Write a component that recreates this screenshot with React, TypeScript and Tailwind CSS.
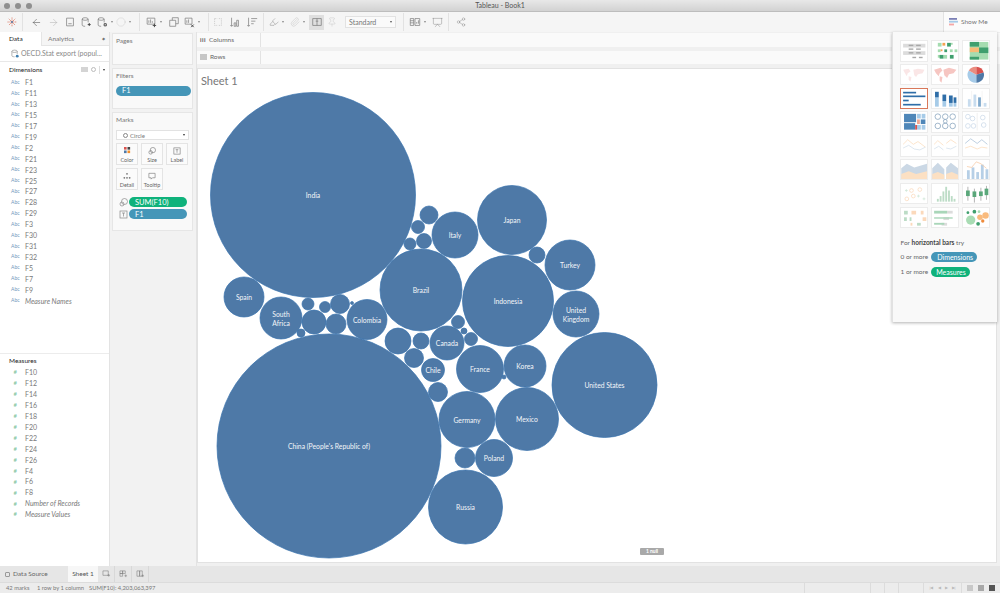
import { ReactNode } from 'react';
import { ArrowLeft, ArrowRight, Share2, Presentation, Paperclip, Pin, Highlighter, Circle as CircleIcon } from 'lucide-react';

// -- Data --------------------------------------------------------------------

const dimensions = ['F1', 'F11', 'F13', 'F15', 'F17', 'F19', 'F2', 'F21', 'F23', 'F25', 'F27', 'F28', 'F29', 'F3', 'F30', 'F31', 'F32', 'F5', 'F7', 'F9'];
const measures = ['F10', 'F12', 'F14', 'F16', 'F18', 'F20', 'F22', 'F24', 'F26', 'F4', 'F6', 'F8'];

// [cx, cy, r, label lines]
const bubbles: [number, number, number, string[]][] = [
  [313, 195, 102.5, ['India']],
  [329, 446, 112, ["China (People's Republic of)"]],
  [421, 290, 41, ['Brazil']],
  [508, 301, 45.5, ['Indonesia']],
  [512, 220, 34.5, ['Japan']],
  [604.5, 385, 52.5, ['United States']],
  [465.5, 507, 37, ['Russia']],
  [467, 419.5, 28, ['Germany']],
  [527, 419, 31.5, ['Mexico']],
  [480, 369, 23.5, ['France']],
  [525, 366, 21, ['Korea']],
  [447, 343, 17, ['Canada']],
  [433, 370, 11.5, ['Chile']],
  [455, 235, 23, ['Italy']],
  [570, 265, 25, ['Turkey']],
  [576, 314, 23, ['United', 'Kingdom']],
  [367, 319.5, 20, ['Colombia']],
  [281, 318, 21, ['South', 'Africa']],
  [244, 297, 20, ['Spain']],
  [494, 458, 18.5, ['Poland']],
  [465, 458, 10, []],
  [429, 215, 9, []],
  [418, 227, 6.5, []],
  [424, 241, 7.5, []],
  [410, 244, 6, []],
  [537, 255, 8, []],
  [458, 322, 6.5, []],
  [464, 331, 3, []],
  [471, 339, 6.5, []],
  [398, 341, 13, []],
  [421, 341, 8, []],
  [414, 358, 9.5, []],
  [438, 392, 9.5, []],
  [504, 377, 2, []],
  [308, 304, 6, []],
  [325, 307, 5.5, []],
  [340, 304, 9.5, []],
  [314, 322, 12, []],
  [336, 324, 10, []],
  [301, 333, 4, []],
  [352, 303, 1.5, []],
];

// -- Small pieces ------------------------------------------------------------

const Caret = () => <span className="mx-[3px] h-0 w-0 border-x-[1.5px] border-t-[2px] border-x-transparent border-t-[#888]" />;

const Sep = () => <span className="mx-[5px] h-[18px] w-px bg-[#e2e2e2]" />;

const Glyph = ({ children, w = 12, dim = false }: { children: ReactNode; w?: number; dim?: boolean }) => (
  <svg viewBox="0 0 14 14" width={w} height={w} fill="none" stroke="#777" strokeWidth={0.8} className={dim ? 'opacity-40' : ''}>
    {children}
  </svg>
);

const Db = ({ badge }: { badge: string }) => (
  <Glyph>
    <ellipse cx="6" cy="3.5" rx="3.5" ry="1.5" />
    <path d="M2.5 3.5v7c0 1 1.5 1.5 3.5 1.5M9.5 3.5v4" />
    <path d={badge} stroke="#444" strokeWidth={1.1} />
  </Glyph>
);

const Pill = ({ color, label, className }: { color: string; label: string; className: string }) => (
  <div className={`flex items-center rounded-full pl-[6px] text-[7.5px] text-white ${color} ${className}`}>{label}</div>
);

const MarkCard = ({ label, children }: { label: string; children: ReactNode }) => (
  <div className="flex h-[22px] w-[22px] flex-col items-center border border-[#e4e4e4] bg-[#fbfbfb] pt-[2px] text-[5.5px] text-[#666]">
    <div className="flex h-[11px] items-center">{children}</div>
    <span className="mt-px">{label}</span>
  </div>
);

const Shelf = ({ icon, label }: { icon: ReactNode; label: string }) => (
  <div className="flex h-[13.5px] bg-[#fafafa]">
    <div className="flex w-[64px] items-center gap-[3px] border-r border-[#e3e3e3] pl-[3px] text-[6.5px] text-[#666]">
      {icon}
      {label}
    </div>
    <div className="flex-1" />
  </div>
);

// -- Show Me thumbnails ------------------------------------------------------

const Thumb = ({ children, active = false }: { children: ReactNode; active?: boolean }) => (
  <div className={`h-[21.5px] w-[28.5px] border bg-white ${active ? 'border-[#d9785a]' : 'border-[#ececec]'}`}>
    <svg viewBox="0 0 28 21" className="h-full w-full">
      {children}
    </svg>
  </div>
);

const Rects = ({ items, fill, opacity = 1 }: { items: number[][]; fill: string; opacity?: number }) => (
  <g fill={fill} opacity={opacity}>
    {items.map((r, i) => (
      <rect key={i} x={r[0]} y={r[1]} width={r[2]} height={r[3]} />
    ))}
  </g>
);

const Line = ({ d, c }: { d: string; c: string }) => <path d={d} fill="none" stroke={c} strokeWidth={0.8} />;

const thumbs: ReactNode[] = [
  <g key="text">
    <Rects fill="#dcdcdc" items={[[2, 3, 24, 4], [2, 11, 24, 4]]} />
    <Rects fill="#a8a8a8" items={[[8, 4, 5, 1.5], [16, 4, 5, 1.5], [8, 8, 5, 1.5], [16, 8, 5, 1.5], [8, 12, 5, 1.5], [16, 12, 5, 1.5], [12, 17, 4, 1.5], [19, 17, 4, 1.5]]} />
  </g>,
  <g key="sym">
    <Rects fill="#a5dcb0" items={[[6, 2, 4, 4], [20, 2, 2, 2], [6, 9, 3, 3], [19, 9, 3, 3], [24, 9, 3, 3], [12, 15, 4, 4], [6, 15, 3, 3]]} />
    <Rects fill="#3f9f6e" items={[[16, 2, 4, 4], [13, 9, 3, 3], [8, 15, 4, 4], [19, 15, 4, 4]]} />
    <Rects fill="#f5a252" items={[[11, 2, 3, 3], [9, 9, 2, 2]]} />
  </g>,
  <g key="heat">
    <Rects fill="#a5dcb0" items={[[7, 1, 20, 19]]} />
    <Rects fill="#3f9f6e" items={[[7, 1, 10, 5], [17, 7, 10, 6], [7, 17, 10, 3]]} />
    <Rects fill="#f7bb77" items={[[7, 7, 10, 5]]} />
  </g>,
  <g key="map1" opacity={0.35}>
    <path d="M2 5l6-1 2 3-3 2-1 3-2-3zM8 12l3 1-1 5-2-2zM13 5l5-1 7 1-2 4-5 1-2 3-2-2z" fill="#f2b6b6" />
  </g>,
  <g key="map2">
    <path d="M2 5l7-2 2 3-3 3-1 3-3-3zM8 12l3 1-1 6-2-2zM12 5l6-2 8 2-3 4-5 1-2 4-3-3z" fill="#f6c6c2" />
  </g>,
  <g key="pie">
    <path d="M14 10.5V2a8.5 8.5 0 0 1 8 6z" fill="#d9534f" />
    <path d="M14 10.5l8-2.5a8.5 8.5 0 0 1-8 11z" fill="#4e79a7" />
    <path d="M14 10.5V19a8.5 8.5 0 0 1-8-13z" fill="#a6cbe8" />
    <path d="M14 10.5L6 6a8.5 8.5 0 0 1 8-4z" fill="#ea8d80" />
  </g>,
  <g key="bars">
    <Rects fill="#2f6ea8" items={[[2, 3, 14, 1.8], [2, 7, 24, 1.8], [2, 11.5, 6, 1.8], [2, 16, 19, 1.8]]} />
  </g>,
  <g key="stack">
    <Rects fill="#a6cbe8" items={[[3, 9, 4, 10], [11, 13, 4, 6], [18, 15, 4, 4]]} />
    <Rects fill="#2f6ea8" items={[[3, 3, 4, 6], [11, 6, 4, 7], [18, 7, 4, 8], [23, 9, 3, 6]]} />
    <Rects fill="#a6cbe8" items={[[23, 15, 3, 4]]} />
  </g>,
  <g key="side">
    <Rects fill="#c8dcee" items={[[5, 11, 3, 8], [11, 6, 3, 13], [22, 15, 3, 4]]} />
    <Rects fill="#7fa9cc" items={[[16, 9, 3, 10]]} />
    <Rects fill="#e8e8e8" items={[[9, 2, 0.5, 17], [20, 2, 0.5, 17]]} />
  </g>,
  <g key="tree">
    <Rects fill="#4e86b8" items={[[3, 2, 13, 9], [3, 12, 12, 7], [21, 8, 5, 5]]} />
    <Rects fill="#a6cbe8" items={[[17, 2, 4, 5], [22, 2, 4, 5], [17, 14, 4, 5], [22, 14, 4, 5]]} />
    <Rects fill="#d9534f" items={[[15, 14, 2, 5]]} />
    <Rects fill="#f2a58e" items={[[17, 8, 3, 5]]} />
  </g>,
  <g key="circles" fill="none" stroke="#8fa9c2" strokeWidth={0.9}>
    <circle cx="6" cy="5" r="3" /><circle cx="14" cy="5" r="3" /><circle cx="22" cy="5" r="3" />
    <circle cx="6" cy="15" r="3" /><circle cx="14" cy="15" r="3" /><circle cx="22" cy="15" r="3" />
    <circle cx="14" cy="10" r="2" />
  </g>,
  <g key="circles2" fill="none" stroke="#cfdcea" strokeWidth={0.9}>
    <circle cx="5" cy="5" r="2.5" /><circle cx="10" cy="7" r="2.5" /><circle cx="21" cy="6" r="2.5" />
    <circle cx="5" cy="15" r="2.5" /><circle cx="11" cy="15" r="2.5" /><circle cx="22" cy="14" r="2.5" />
    <path d="M15 1v19" stroke="#eee" />
  </g>,
  <g key="line1">
    <Line d="M2 9l5-5 6 5 5-3 8 6" c="#fbdcbc" />
    <Line d="M2 13l6-3 6 4 6 1 6-3" c="#d3dfea" />
  </g>,
  <g key="line2">
    <Line d="M2 9l4-4 6 5M15 8l5-4 6 4" c="#fbdcbc" />
    <Line d="M2 14l5-3 5 4M15 13l5 1 6-3" c="#d3dfea" />
  </g>,
  <g key="line3">
    <Line d="M2 8l6-5 7 5 5-4 6 5" c="#a9c0d6" />
    <Line d="M2 13l6-2 7 3 5-2 6 1" c="#fbdcbc" />
  </g>,
  <g key="area1">
    <path d="M0 21V9l6-5 8 4 14-4v17z" fill="#cbd8e5" />
    <path d="M0 21v-6l8-3 8 3 12-3v9z" fill="#fce0c3" />
  </g>,
  <g key="area2">
    <path d="M0 21V9l6-6 7 7V21zM15 21V8l5-5 8 6v12z" fill="#cbd8e5" />
    <path d="M0 21v-6l6-2 7 3v5zM15 21v-6l6-2 7 3v5z" fill="#fce0c3" />
  </g>,
  <g key="dual">
    <Rects fill="#b6cfe6" items={[[4, 11, 3, 10], [9, 8, 3, 13], [14, 13, 3, 8], [19, 5, 3, 16], [24, 10, 3, 11]]} />
    <Line d="M4 7l5 1 5-6 5 2 6 5" c="#f7c9a3" />
  </g>,
  <g key="scatter" fill="none" stroke="#fbd9bb" strokeWidth={0.8}>
    <circle cx="6" cy="16" r="2" /><circle cx="11" cy="7" r="2" /><circle cx="20" cy="6" r="2" /><circle cx="13" cy="13" r="2" />
    <path d="M4 7h3M5.500 5.500v3M17 13h3M18.500 11.500v3M23 16h3M24.500 14.500v3" stroke="#cfe6d6" />
  </g>,
  <g key="hist">
    <Rects fill="#bcdcc6" items={[[5, 16, 2, 3], [8, 13, 2, 6], [11, 8, 2, 11], [14, 3, 2, 16], [17, 7, 2, 12], [20, 13, 2, 6], [23, 16, 2, 3]]} />
  </g>,
  <g key="box">
    <path d="M5 3v15M12 5v15M19 4v14M25 2v15" stroke="#777" strokeWidth={0.6} />
    <Rects fill="#5aa77a" items={[[3, 7, 4, 6], [10, 8, 4, 6], [17, 8, 4, 5], [23, 5, 4, 7]]} />
  </g>,
  <g key="gantt">
    <Rects fill="#bcdcc6" items={[[3, 3, 4, 4], [3, 10, 3, 4], [9, 10, 2, 4], [17, 16, 4, 3]]} />
    <Rects fill="#fbd9bb" items={[[11, 3, 5, 4], [21, 3, 3, 4], [23, 10, 4, 4], [10, 16, 2, 3]]} />
  </g>,
  <g key="bullet">
    <Rects fill="#dcdcdc" items={[[16, 3, 6, 3], [12, 10, 6, 3], [10, 16, 6, 3]]} />
    <Rects fill="#a9d6b9" items={[[2, 3, 14, 3], [2, 10, 20, 1.5], [2, 16, 11, 2]]} />
  </g>,
  <g key="packed">
    <circle cx="8" cy="13" r="5" fill="#a9dcb4" /><circle cx="12" cy="4" r="2" fill="#3f9f6e" /><circle cx="5" cy="5" r="1.500" fill="#3f9f6e" />
    <circle cx="17" cy="4" r="1.500" fill="#a9dcb4" /><circle cx="18" cy="10" r="3" fill="#f9bb7d" /><circle cx="24" cy="8" r="3.500" fill="#f9bb7d" />
    <circle cx="21" cy="14" r="1.800" fill="#ee8b3c" /><circle cx="16" cy="17" r="2" fill="#3f9f6e" />
  </g>,
];

// -- Sections ----------------------------------------------------------------

const Toolbar = () => (
  <div className="flex h-[20px] shrink-0 items-center bg-[#f5f5f5] pl-[7px]">
    <svg viewBox="0 0 10 10" width={10} height={10}>
      <path d="M5 0.500v9M0.500 5h9M1.800 1.800l6.400 6.400M8.200 1.800L1.800 8.200" stroke="#e08a78" strokeWidth={1} strokeDasharray="1.200 0.700" />
      <circle cx="5" cy="5" r="1" fill="#4e79a7" />
    </svg>
    <Sep />
    <div className="ml-[3px] flex w-[33px] items-center gap-[6px]">
      <ArrowLeft size={11} strokeWidth={1.1} color="#444" />
      <ArrowRight size={11} strokeWidth={1} color="#aaa" />
    </div>
    <div className="flex items-center gap-[4px]">
      <Glyph><path d="M3 2.500h8v9H3zM5 9h4" /></Glyph>
      <Db badge="M9 10h3.500M10.800 8.200v3.500" />
      <Db badge="M9.500 9h2.500v2.500H9.500z" />
    </div>
    <Caret />
    <CircleIcon size={10} strokeWidth={0.8} color="#bbb" />
    <Caret />
    <Sep />
    <Glyph><path d="M2.500 2.500h9v7h-9zM4.500 8V5M6.500 8V4M8.500 8V6" /><path d="M9 11h4M11 9v4" stroke="#444" strokeWidth={1.1} /></Glyph>
    <Caret />
    <span className="ml-[3px]"><Glyph><path d="M2 5h7v7H2zM5 5V2h7v7H9" /></Glyph></span>
    <span className="ml-[3px]"><Glyph><path d="M2.500 2.500h8v7h-8zM4.500 8V5M6.500 8V4" /><path d="M9.500 10l3 3M12.500 10l-3 3" stroke="#444" strokeWidth={1.1} /></Glyph></span>
    <Caret />
    <Sep />
    <div className="-ml-[2px] flex items-center gap-[5px]">
      <Glyph dim><path d="M3 3h3M8 3h3v8H8M3 3v8h3" strokeDasharray="1.500 1" /></Glyph>
      <Glyph><path d="M3 2v10M1.500 10.500L3 12l1.500-1.500M6 8h2v4H6zM9 5h2v7H9z" /></Glyph>
      <Glyph><path d="M3 2v10M1.500 10.500L3 12l1.500-1.500M6 3h7M6 6h5M6 9h3" /></Glyph>
    </div>
    <Sep />
    <Highlighter size={10} strokeWidth={1} color="#777" />
    <Caret />
    <span className="ml-[3px]"><Paperclip size={10} strokeWidth={1} color="#bbb" /></span>
    <Caret />
    <div className="ml-[1px] flex h-[15px] w-[15px] items-center justify-center bg-[#dfdfdf]">
      <Glyph w={12}><path d="M2 3h10v8H2zM7 3v8M5.500 6h3" /></Glyph>
    </div>
    <span className="ml-[3px]"><Pin size={10} strokeWidth={0.9} color="#bbb" /></span>
    <div className="ml-[8px] mr-[2px] flex h-[12px] w-[51px] items-center justify-between border border-[#e2e2e2] bg-[#fafafa] pl-[3px] pr-[3px] text-[7px] text-[#777]">
      Standard
      <span className="h-0 w-0 border-x-[1.5px] border-t-[2px] border-x-transparent border-t-[#555]" />
    </div>
    <Sep />
    <Glyph><path d="M1.500 3h4v8h-4zM7 3h5.500v8H7zM1.500 5.500h4M1.500 8h4M9 9V7M11 9V5" /></Glyph>
    <Caret />
    <span className="ml-[3px]"><Presentation size={11} strokeWidth={0.9} color="#777" /></span>
    <Sep />
    <Share2 size={10} strokeWidth={0.9} color="#777" className="ml-[2px]" />
    <div className="ml-auto flex h-full w-[57px] items-center gap-[3px] self-stretch border-l border-[#e2e2e2] bg-[#fbfbfb] pl-[5px] text-[6.5px] text-[#777]">
      <svg viewBox="0 0 9 9" width={9} height={9}>
        <rect y="0" width="8" height="1.800" fill="#7b7fb5" />
        <rect y="2.800" width="9" height="1.800" fill="#a6cbe8" />
        <rect y="5.600" width="5" height="1.800" fill="#f4a6a6" />
      </svg>
      Show Me
    </div>
  </div>
);

const FieldRow = ({ name, kind, italic = false }: { name: string; kind: 'dim' | 'mes'; italic?: boolean }) => (
  <div className="flex h-[10.93px] items-center">
    <span className="flex w-[25px] justify-start pl-[11px]">
      {kind === 'dim' ? (
        <span className="text-[5px] text-[#6f96bb]">Abc</span>
      ) : (
        <span className="ml-[2.500px] text-[6px] leading-none text-[#7cc29b]">#</span>
      )}
    </span>
    <span className={`text-[7px] text-[#7a7a7a] ${italic ? 'italic' : ''}`}>{name}</span>
  </div>
);

const DataPane = () => (
  <div className="flex w-[110px] flex-col border-r border-[#e3e3e3] bg-white">
    <div className="flex h-[14px] text-[6.500px]">
      <div className="flex w-[41px] items-center pl-[9px] text-[#222]">Data</div>
      <div className="flex flex-1 items-center justify-between border-b border-l border-[#e5e5e5] bg-[#f5f5f5] pl-[6px] pr-[4px] text-[#777]">
        Analytics
        <span className="text-[4px]">◆</span>
      </div>
    </div>
    <div className="flex h-[16px] items-center gap-[2px] border-b border-[#e8e8e8] pl-[11px] text-[7px] text-[#888]">
      <svg viewBox="0 0 9 10" width={8} height={9} fill="none" stroke="#888" strokeWidth={0.7}>
        <ellipse cx="4" cy="2.500" rx="3" ry="1.300" />
        <path d="M1 2.500v5c0 .7 1.300 1.200 3 1.200M7 2.500v3" />
        <circle cx="7" cy="8" r="1.600" fill="#3f7fb0" stroke="none" />
      </svg>
      OECD.Stat export (popul...
    </div>
    <div className="flex h-[15px] shrink-0 items-center justify-between pl-[9px] pr-[4px] text-[6.500px] text-[#222]">
      Dimensions
      <span className="flex items-center gap-[3px]">
        <span className="h-[5px] w-[7px] bg-[#d4d4d4]" />
        <span className="h-[5px] w-[5px] rounded-full border border-[#bbb]" />
        <span className="h-[8px] w-px bg-[#ddd]" />
        <span className="h-0 w-0 border-x-[1.500px] border-t-[2px] border-x-transparent border-t-[#333]" />
      </span>
    </div>
    <div className="h-[276px] shrink-0">
      {dimensions.map((d) => (
        <FieldRow key={d} name={d} kind="dim" />
      ))}
      <FieldRow name="Measure Names" kind="dim" italic />
    </div>
    <div className="flex h-[14px] shrink-0 items-center border-t border-[#ececec] pl-[9px] text-[6.500px] text-[#222]">Measures</div>
    <div className="flex-1">
      {measures.map((m) => (
        <FieldRow key={m} name={m} kind="mes" />
      ))}
      <FieldRow name="Number of Records" kind="mes" italic />
      <FieldRow name="Measure Values" kind="mes" italic />
    </div>
  </div>
);

const CardsPane = () => (
  <div className="flex w-[86px] flex-col gap-[3px] bg-[#f2f2f2] pl-[2px] pr-[3px] pt-[1px]">
    <div className="h-[32px] border border-[#e6e6e6] bg-[#f9f9f9] pl-[3px] pt-[1.500px] text-[6.500px] text-[#777]">Pages</div>
    <div className="h-[41px] border border-[#e6e6e6] bg-[#f9f9f9] pl-[3px] pt-[1.500px] text-[6.500px] text-[#777]">
      Filters
      <Pill color="bg-[#4596b8]" label="F1" className="mt-[5.500px] h-[10px] w-[75px]" />
    </div>
    <div className="h-[119px] border border-[#e6e6e6] bg-[#f9f9f9] pl-[3px] pt-[1.500px] text-[6.500px] text-[#777]">
      Marks
      <div className="mt-[5.500px] flex h-[10.500px] w-[73px] items-center justify-between border border-[#e2e2e2] bg-white pl-[6px] pr-[3px] text-[6px]">
        <span className="flex items-center gap-[2px]">
          <span className="h-[5px] w-[5px] rounded-full border border-[#888]" />
          Circle
        </span>
        <span className="h-0 w-0 border-x-[1.500px] border-t-[2px] border-x-transparent border-t-[#333]" />
      </div>
      <div className="mt-[3px] flex w-[75px] flex-wrap gap-x-[3px] gap-y-[3px]">
        <MarkCard label="Color">
          <svg viewBox="0 0 8 8" width={7} height={7}>
            <rect width="3" height="3" fill="#d9534f" /><rect x="4" width="3" height="3" fill="#444" />
            <rect y="4" width="3" height="3" fill="#4e79a7" /><rect x="4" y="4" width="3" height="3" fill="#f28e2b" />
          </svg>
        </MarkCard>
        <MarkCard label="Size">
          <svg viewBox="0 0 9 9" width={8} height={8} fill="none" stroke="#777" strokeWidth={0.7}>
            <circle cx="5.500" cy="3.500" r="3" /><circle cx="3" cy="6" r="2" />
          </svg>
        </MarkCard>
        <MarkCard label="Label">
          <svg viewBox="0 0 9 9" width={8} height={8} fill="none" stroke="#777" strokeWidth={0.7}>
            <rect x="1" y="1" width="7" height="7" /><path d="M3 3h3M4.500 3v3.500" />
          </svg>
        </MarkCard>
        <MarkCard label="Detail">
          <svg viewBox="0 0 9 9" width={8} height={8} fill="#777">
            <circle cx="4.500" cy="2" r="1" /><circle cx="1.500" cy="6.500" r="1" /><circle cx="4.500" cy="6.500" r="1" /><circle cx="7.500" cy="6.500" r="1" />
          </svg>
        </MarkCard>
        <MarkCard label="Tooltip">
          <svg viewBox="0 0 9 9" width={8} height={8} fill="none" stroke="#777" strokeWidth={0.7}>
            <path d="M1 1.500h7v5H5L3.500 8V6.500H1z" />
          </svg>
        </MarkCard>
      </div>
      <div className="mt-[7px] flex items-center gap-[1px]">
        <svg viewBox="0 0 9 9" width={9} height={9} className="ml-[3px]" fill="none" stroke="#888" strokeWidth={0.7}>
          <circle cx="5.500" cy="3.500" r="3" /><circle cx="3" cy="6" r="2" />
        </svg>
        <Pill color="bg-[#0fb27b]" label="SUM(F10)" className="h-[10px] w-[58px]" />
      </div>
      <div className="mt-[2px] flex items-center gap-[1px]">
        <svg viewBox="0 0 9 9" width={9} height={9} className="ml-[3px]" fill="none" stroke="#888" strokeWidth={0.7}>
          <rect x="1" y="1" width="7" height="7" /><path d="M3 3h3M4.500 3v3.500" />
        </svg>
        <Pill color="bg-[#4596b8]" label="F1" className="h-[10px] w-[58px]" />
      </div>
    </div>
  </div>
);

const Chart = () => (
  <svg viewBox="198 69 798 493" className="absolute inset-0 h-full w-full">
    {bubbles.map(([cx, cy, r, lines]) => (
      <g key={`${cx}-${cy}`}>
        <circle cx={cx} cy={cy} r={r} fill="#4e79a7" stroke="#3a72ad" strokeWidth={0.7} />
        {lines.map((line, i) => (
          <text key={line} x={cx} y={cy + 3.200 + (i - (lines.length - 1) / 2) * 9} textAnchor="middle" fill="#f4f6f9" fontSize={6.800}>
            {line}
          </text>
        ))}
      </g>
    ))}
  </svg>
);

const Stage = () => (
  <div className="flex min-w-0 flex-1 flex-col gap-[4px] border-l border-[#e3e3e3] bg-[#f0f0f0] pt-[1px]">
    <Shelf
      label="Columns"
      icon={<span className="text-[6px] font-bold leading-none tracking-[0.5px] text-[#555]">iii</span>}
    />
    <Shelf
      label="Rows"
      icon={
        <svg viewBox="0 0 7 6" width={7} height={6} stroke="#666" strokeWidth={0.7}>
          <path d="M0 1h7M0 3h7M0 5h7" />
        </svg>
      }
    />
    <div className="relative mb-[3px] mr-[3px] h-[495px] border border-[#e2e2e2] bg-white">
      <div className="pl-[3px] pt-[5px] text-[11px] leading-[14px] text-[#777]">Sheet 1</div>
      <Chart />
      <div className="absolute left-[442px] top-[479px] flex h-[7px] w-[24px] items-center justify-center rounded-[1px] bg-[#a9a9a9] text-[5px] font-bold text-white">
        1 null
      </div>
    </div>
  </div>
);

const ShowMePanel = () => (
  <div className="absolute right-[3px] top-[32px] h-[290px] w-[105px] border-l border-[#e2e2e2] bg-[#f9f9f9] pl-[6.500px] pt-[8px] shadow-[0_1px_3px_rgba(0,0,0,0.3)]">
    <div className="grid grid-cols-[28.500px_28.500px_28.500px] gap-x-[2.500px] gap-y-[2.300px]">
      {thumbs.map((t, i) => (
        <Thumb key={i} active={i === 6}>
          {t}
        </Thumb>
      ))}
    </div>
    <div className="ml-[1px] mt-[10px] text-[6.500px] text-[#666]">
      For <b className="text-[#444]">horizontal bars</b> try
    </div>
    <div className="ml-[1px] mt-[4px] flex items-center gap-[3px] text-[6.500px] text-[#666]">
      0 or more
      <div className="flex h-[10px] w-[46px] items-center rounded-full bg-[#4596b8] pl-[6px] text-[7px] text-white">Dimensions</div>
    </div>
    <div className="ml-[1px] mt-[5px] flex items-center gap-[3px] text-[6.500px] text-[#666]">
      1 or more
      <div className="flex h-[10px] w-[39px] items-center rounded-full bg-[#0fb27b] pl-[5px] text-[7px] text-white">Measures</div>
    </div>
  </div>
);

const SheetTabs = () => (
  <div className="flex h-[16px] shrink-0 items-stretch bg-[#e6e6e6] text-[6.500px] text-[#666]">
    <div className="flex w-[68px] items-center gap-[3px] pl-[5px]">
      <span className="h-[5px] w-[5px] rounded-[1px] border border-[#999]" />
      Data Source
    </div>
    <div className="flex w-[30px] items-center justify-center bg-[#f7f7f7] text-[#555]">Sheet 1</div>
    {['M1 1h6v5H1zM6 6h3M7.500 4.500v3', 'M1 1h3v3H1zM4 1h3v3H4zM1 4h3v3H1zM6 6.500h3M7.500 5v3', 'M1 1h3v6H1zM4 1h3v6H4zM6 6.500h3M7.500 5v3'].map((d) => (
      <div key={d} className="flex w-[17px] items-center justify-center border-r border-[#d8d8d8]">
        <svg viewBox="0 0 10 9" width={9} height={8} fill="none" stroke="#777" strokeWidth={0.6}>
          <path d={d} />
        </svg>
      </div>
    ))}
  </div>
);

const StatusBar = () => (
  <div className="flex h-[11px] shrink-0 items-center border-t border-[#dcdcdc] bg-[#ececec] pl-[6px] text-[5.800px] text-[#777]">
    <span className="w-[31px]">42 marks</span>
    <span className="w-[52px]">1 row by 1 column</span>
    <span>SUM(F10): 4,203,063,397</span>
    <div className="ml-auto flex h-full items-center">
      <span className="h-full w-[66px] border-l border-[#dcdcdc]" />
      <span className="h-full w-[14px] border-l border-[#dcdcdc]" />
      <span className="h-full w-[14px] border-l border-[#dcdcdc]" />
      <span className="flex h-full w-[25px] border-l border-[#dcdcdc]" />
      <div className="flex h-full w-[38px] items-center justify-center gap-[4px] border-l border-[#dcdcdc] text-[4px] text-[#bbb]">
        <span>|◀</span><span>◀</span><span>▶</span><span>▶|</span>
      </div>
      <div className="flex h-full w-[39px] items-center justify-center gap-[5px] border-l border-[#dcdcdc]">
        <span className="h-[6px] w-[6px] bg-[#c8c8c8]" />
        <span className="h-[6px] w-[6px] bg-[#a8a8a8]" />
        <span className="h-[6px] w-[6px] bg-[#555]" />
      </div>
    </div>
  </div>
);

// -- Main component ----------------------------------------------------------

const App = () => (
  <div className="relative flex h-[593px] w-[1000px] flex-col overflow-hidden bg-[#f2f2f2] font-['Lato','Liberation_Sans',sans-serif]">
    <div className="relative flex h-[12px] shrink-0 items-center justify-center border-b border-[#bdbdbd] bg-gradient-to-b from-[#e8e8e8] to-[#d2d2d2] text-[7px] text-[#555]">
      <div className="absolute left-[4px] flex gap-[5px]">
        <span className="h-[6px] w-[6px] rounded-full bg-[#8f8f8f]" />
        <span className="h-[6px] w-[6px] rounded-full bg-[#8f8f8f]" />
        <span className="h-[6px] w-[6px] rounded-full bg-[#8f8f8f]" />
      </div>
      Tableau - Book1
    </div>
    <Toolbar />
    <div className="flex h-[534px] min-h-0 shrink-0">
      <DataPane />
      <CardsPane />
      <Stage />
    </div>
    <ShowMePanel />
    <SheetTabs />
    <StatusBar />
  </div>
);

export default App;
